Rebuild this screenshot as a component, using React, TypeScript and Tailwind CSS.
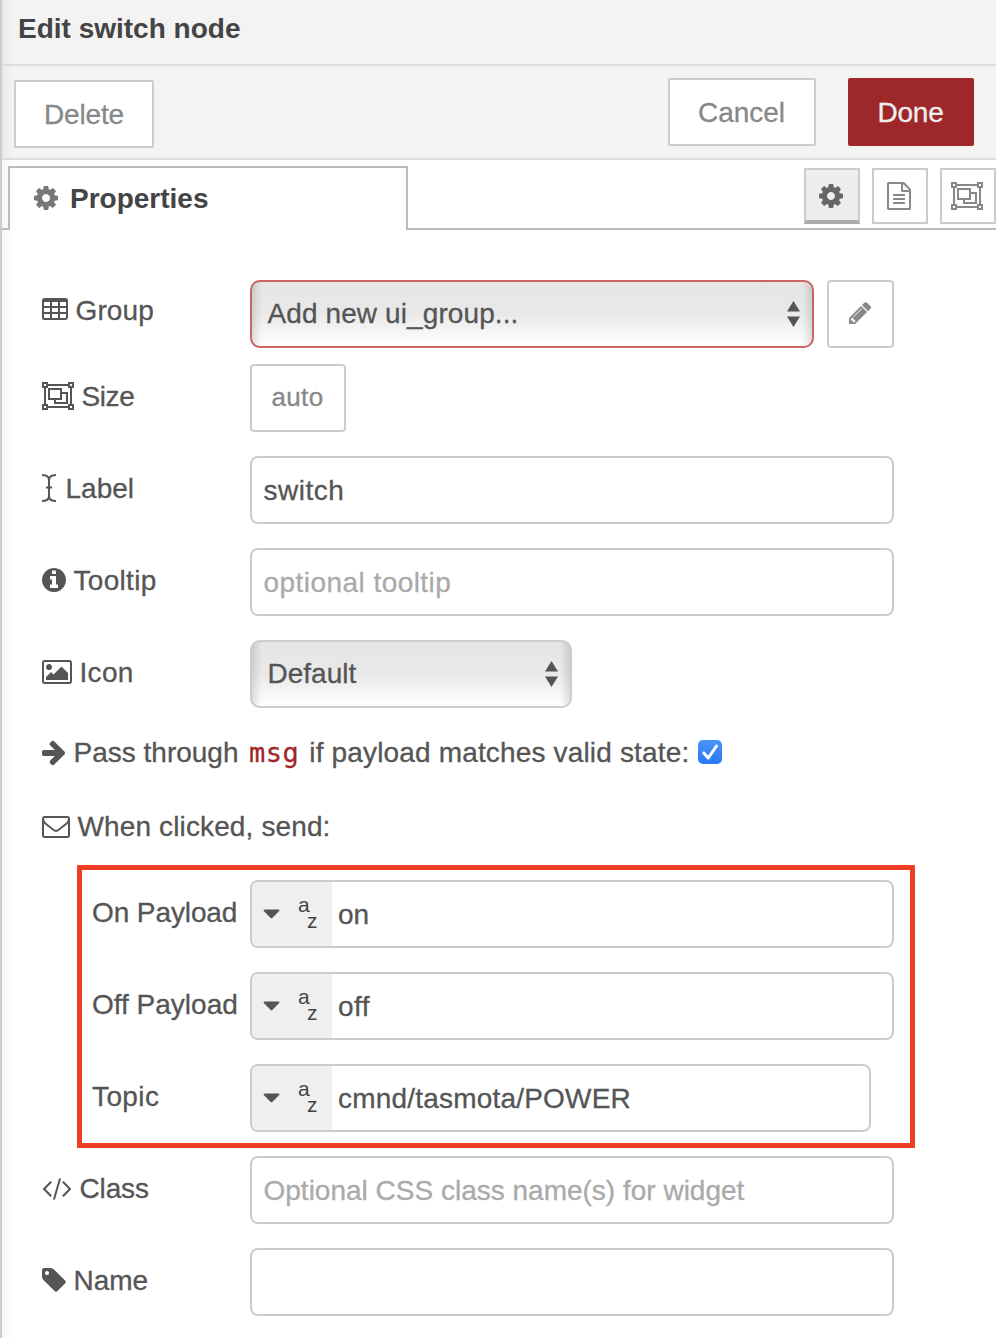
import React from "react";

const PATHS = {
  cog: "M1152 896q0-106-75-181t-181-75-181 75-75 181 75 181 181 75 181-75 75-181zm512-109v222q0 12-8 23t-20 13l-185 28q-19 54-39 91 35 50 107 138 10 12 10 25t-9 23q-27 37-99 108t-94 71q-12 0-26-9l-138-108q-44 23-91 38-16 136-29 186-7 28-36 28h-222q-14 0-24.5-8.5t-11.5-21.5l-28-184q-49-16-90-37l-141 107q-10 9-25 9-14 0-25-11-126-114-165-168-7-10-7-23 0-12 8-23 15-21 51-66.5t54-70.5q-27-50-41-99l-183-27q-13-2-21-12.5t-8-23.5v-222q0-12 8-23t19-13l186-28q14-46 39-92-40-57-107-138-10-12-10-24 0-10 9-23 26-36 98.5-107.5t94.5-71.5q13 0 26 10l138 107q44-23 91-38 16-136 29-186 7-28 36-28h222q14 0 24.5 8.5t11.5 21.5l28 184q49 16 90 37l142-107q9-9 24-9 13 0 25 10 129 119 165 170 7 8 7 22 0 12-8 23-15 21-51 66.5t-54 70.5q26 50 41 98l183 28q13 2 21 12.5t8 23.5z",
  envelope:
    "M1664 1504v-768q-32 36-69 66-268 206-426 338-51 43-83 67t-86.5 48.5-102.5 24.5h-2q-48 0-102.5-24.5t-86.5-48.5-83-67q-158-132-426-338-37-30-69-66v768q0 13 9.5 22.5t22.5 9.5h1472q13 0 22.5-9.5t9.5-22.5zm0-1051v-24.5l-.5-13-3-12.5-5.5-9-9-7.5-14-2.5h-1472q-13 0-22.5 9.5t-9.5 22.5q0 168 147 284 193 152 401 317 6 5 35 29.5t46 37.5 44.5 31.5 50.5 27.5 43 9h2q20 0 43-9t50.5-27.5 44.5-31.5 46-37.5 35-29.5q208-165 401-317 54-43 100.5-115.5t46.5-131.5zm128-37v1088q0 66-47 113t-113 47h-1472q-66 0-113-47t-47-113v-1088q0-66 47-113t113-47h1472q66 0 113 47t47 113z",
  arrow:
    "M1600 960q0 54-37 91l-651 651q-39 37-91 37-51 0-90-37l-75-75q-38-38-38-91t38-91l293-293h-704q-52 0-84.5-37.5t-32.5-90.5v-128q0-53 32.5-90.5t84.5-37.5h704l-293-294q-38-36-38-90t38-90l75-75q38-38 90-38 53 0 91 38l651 651q37 35 37 90z",
  info: "M1152 1376v-160q0-14-9-23t-23-9h-96v-512q0-14-9-23t-23-9h-320q-14 0-23 9t-9 23v160q0 14 9 23t23 9h96v320h-96q-14 0-23 9t-9 23v160q0 14 9 23t23 9h448q14 0 23-9t9-23zm-128-896v-160q0-14-9-23t-23-9h-192q-14 0-23 9t-9 23v160q0 14 9 23t23 9h192q14 0 23-9t9-23zm640 416q0 209-103 385.5t-279.5 279.5-385.5 103-385.5-103-279.5-279.5-103-385.5 103-385.5 279.5-279.5 385.5-103 385.5 103 279.5 279.5 103 385.5z",
  tag: "M576 448q0-53-37.5-90.5t-90.5-37.5-90.5 37.5-37.5 90.5 37.5 90.5 90.5 37.5 90.5-37.5 37.5-90.5zm1067 576q0 53-37 90l-491 492q-39 37-91 37-53 0-90-37l-715-716q-38-37-64.5-101t-26.5-117v-416q0-52 38-90t90-38h416q53 0 117 26.5t102 64.5l715 714q37 39 37 91z",
  pencil:
    "M491 1536l91-91-235-235-91 91v107h128v128h107zm523-928q0-22-22-22-10 0-17 7l-542 542q-7 7-7 17 0 22 22 22 10 0 17-7l542-542q7-7 7-17zm-54-192l416 416-832 832h-416v-416zm683 96q0 53-37 90l-166 166-416-416 166-165q36-38 90-38 53 0 91 38l235 234q37 39 37 91z",
  file: "M1596 380q28 28 48 76t20 88v1152q0 40-28 68t-68 28h-1344q-40 0-68-28t-28-68v-1600q0-40 28-68t68-28h896q40 0 88 20t76 48zm-444-244v376h376q-10-29-22-41l-313-313q-12-12-41-22zm384 1528v-1024h-416q-40 0-68-28t-28-68v-416h-768v1536h1280zm-1024-864q0-14 9-23t23-9h704q14 0 23 9t9 23v64q0 14-9 23t-23 9h-704q-14 0-23-9t-9-23v-64zm736 224q14 0 23 9t9 23v64q0 14-9 23t-23 9h-704q-14 0-23-9t-9-23v-64q0-14 9-23t23-9h704zm0 256q14 0 23 9t9 23v64q0 14-9 23t-23 9h-704q-14 0-23-9t-9-23v-64q0-14 9-23t23-9h704z",
  image:
    "M576 576q0 80-56 136t-136 56-136-56-56-136 56-136 136-56 136 56 56 136zm1024 384v448h-1408v-192l320-320 160 160 512-512zm96-704h-1600q-13 0-22.5 9.5t-9.5 22.5v1216q0 13 9.5 22.5t22.5 9.5h1600q13 0 22.5-9.5t9.5-22.5v-1216q0-13-9.5-22.5t-22.5-9.5zm160 32v1216q0 66-47 113t-113 47h-1600q-66 0-113-47t-47-113v-1216q0-66 47-113t113-47h1600q66 0 113 47t47 113z",
  code: "M681 1399l-50 50q-10 10-23 10t-23-10l-466-466q-10-10-10-23t10-23l466-466q10-10 23-10t23 10l50 50q10 10 10 23t-10 23l-393 393 393 393q10 10 10 23t-10 23zm591-1067l-373 1291q-4 13-15.5 19.5t-23.5 2.5l-62-17q-13-4-19.5-15.5t-2.5-24.5l373-1291q4-13 15.5-19.5t23.5-2.5l62 17q13 4 19.5 15.5t2.5 24.5zm657 651l-466 466q-10 10-23 10t-23-10l-50-50q-10-10-10-23t10-23l393-393-393-393q-10-10-10-23t10-23l50-50q10-10 23-10t23 10l466 466q10 10 10 23t-10 23z",
  table:
    "M192 128h1408q128 8 128 160v1088q0 152-160 160h-1344q-160 0-160-160v-1088q0-152 128-160zM192 384v256h384v-256zM704 384v256h384v-256zM1216 384v256h384v-256zM192 768v256h384v-256zM704 768v256h384v-256zM1216 768v256h384v-256zM192 1152v256h384v-256zM704 1152v256h384v-256zM1216 1152v256h384v-256z",
};

/* x = left edge of the glyph in font units, w = advance width in font units, scale = units per pixel */
function Glyph({ name, x = 128, w = 1536, scale = 64 }: { name: keyof typeof PATHS; x?: number; w?: number; scale?: number }) {
  return (
    <svg
      className="block shrink-0"
      width={w / scale}
      height={1792 / scale}
      viewBox={`${x} 0 ${w} 1792`}
      fill="currentColor"
      fillRule={name === "table" ? "evenodd" : "nonzero"}
    >
      <path d={PATHS[name]} />
    </svg>
  );
}

function ObjectGroup() {
  return (
    <svg className="block shrink-0" width={32} height={28} viewBox="0 0 32 28" fill="none" stroke="currentColor" strokeWidth={2}>
      <path d="M6 3h20M6 25h20M3 6v16M29 6v16" />
      <path d="M1 1h4v4h-4zM27 1h4v4h-4zM1 23h4v4h-4zM27 23h4v4h-4z" />
      <path d="M7 7h12v10h-12z" />
      <path d="M20 11h5v10h-12v-3" />
    </svg>
  );
}

function ICursor() {
  return (
    <svg className="mr-[2px] block shrink-0" width={14} height={28} viewBox="0 0 14 28" fill="none" stroke="currentColor" strokeWidth={2}>
      <path d="M0 1q7 0 7 5v16q0 5-7 5M14 1q-7 0-7 5v16q0 5 7 5M4 13.5h6" />
    </svg>
  );
}

function Label({ icon, text, className = "", textClass = "" }: { icon?: React.ReactNode; text: string; className?: string; textClass?: string }) {
  return (
    <div className={`flex h-10 shrink-0 items-center gap-[7.5px] leading-10 whitespace-nowrap ${className}`}>
      {icon}
      <span className={`pt-[2px] ${textClass}`}>{text}</span>
    </div>
  );
}

const row = "flex h-[68px] pl-10";
const labelBox = "w-[208px] mt-3";
const input =
  "h-[68px] w-[644px] rounded-[8px] border-2 border-[#ccc] bg-white pl-[11.5px] pt-[2px] text-[28px] text-[#555] placeholder:text-[#aaa] outline-none";

function UpDown() {
  return (
    <svg className="block" width={13} height={26} viewBox="0 0 13 26" fill="#555">
      <path d="M6.500 0L13 10.500H0zM0 15.500H13L6.500 26z" />
    </svg>
  );
}

function Select({ text, className, textClass = "" }: { text: string; className: string; textClass?: string }) {
  return (
    <div
      className={`flex h-[68px] items-center justify-between rounded-[10px] border-2 pl-[15.5px] pr-3 bg-[linear-gradient(90deg,rgba(0,0,0,0.11),transparent_10px,transparent_calc(100%-10px),rgba(0,0,0,0.11)),linear-gradient(#e5e5e5,#e9e9e9_50%,#fff)] ${className}`}
    >
      <span className={textClass}>{text}</span>
      <UpDown />
    </div>
  );
}

function Payload({ label, value, labelClass, width, valueClass }: { label: string; value: string; labelClass: string; width: string; valueClass: string }) {
  return (
    <div className="flex h-[68px] pl-[10px]">
      <Label text={label} className="mt-3 w-[158px]" textClass={labelClass} />
      <div className={`flex h-[68px] overflow-hidden rounded-[8px] border-2 border-[#ccc] bg-white ${width}`}>
        <div className="flex w-20 shrink-0 items-center bg-[#efefef] pl-[11px]">
          <svg width={17} height={10} viewBox="0 0 17 10" fill="#555">
            <path d="M1.500 0.500h14q1.500 0 .7 1.500l-6.600 6.800q-1.100 1-2.200 0L.8 2Q0 .5 1.500.5z" />
          </svg>
          <div className="ml-[18px] flex flex-col text-[21px] leading-5 text-[#444] [-webkit-text-stroke:0]">
            <span className="-mt-[3px]">a</span>
            <span className="-mt-1 pl-[9px]">z</span>
          </div>
        </div>
        <span className={`pl-[6px] leading-[66px] ${valueClass}`}>{value}</span>
      </div>
    </div>
  );
}

export default function App() {
  return (
    <div className="flex h-[1338px] w-[996px] flex-col overflow-hidden border-l-2 border-[#ccc] bg-[linear-gradient(90deg,rgba(0,0,0,0.045),transparent_10px)] font-['Liberation_Sans',Arial,sans-serif] text-[28px] text-[#555] [-webkit-text-stroke:0.3px]">
      <header className="h-[66px] shrink-0 border-b-2 border-[#ddd] bg-black/[0.047] pl-4 pt-[9px] font-bold leading-10 text-[#444] [-webkit-text-stroke:0]">
        Edit switch node
      </header>
      <div className="flex h-[94px] shrink-0 border-b-2 border-[#ddd] bg-black/[0.047] pl-3 text-[#888]">
        <button className="mt-[14px] h-[68px] w-[140px] rounded-[2px] border-2 border-[#ccc] bg-white pt-[2px] tracking-[-0.15px]">Delete</button>
        <button className="ml-[514px] mt-3 h-[68px] w-[148px] rounded-[2px] border-2 border-[#ccc] bg-white pt-[2px] pr-[1px]">Cancel</button>
        <button className="ml-8 mt-3 h-[68px] w-[126px] rounded-[2px] bg-[#9e2729] pt-[2px] pr-[1px] tracking-[-0.2px] text-[#eee]">Done</button>
      </div>
      <nav className="flex h-[70px] shrink-0">
        <div className="w-[6px] border-b-2 border-[#bbb]" />
        <div className="mt-[6px] flex h-16 w-[400px] items-center gap-3 border-2 border-b-0 border-[#bbb] bg-white pl-6 text-[#777]">
          <div className="-mt-[2px]">
            <Glyph name="cog" />
          </div>
          <span className="font-bold text-[#444] [-webkit-text-stroke:0]">Properties</span>
        </div>
        <div className="flex flex-1 justify-end gap-3 border-b-2 border-[#bbb] pt-2 text-[#888]">
          <div className="flex size-14 items-center justify-center border-2 border-b-4 border-[#ccc] border-b-[#aaa] bg-[#eee] pt-[2px] pr-[2px] text-[#666]">
            <Glyph name="cog" />
          </div>
          <div className="flex size-14 items-center justify-center border-2 border-[#ccc] bg-white pr-[2px]">
            <Glyph name="file" />
          </div>
          <div className="flex size-14 items-center justify-center border-2 border-[#ccc] bg-white pr-[2px]">
            <ObjectGroup />
          </div>
        </div>
      </nav>
      <main className="pt-[50px]">
        <div className={row}>
          <Label icon={<Glyph name="table" x={64} w={1664} />} text="Group" className="mt-[10px] w-[208px]" textClass="tracking-[0.1px]" />
          <Select text="Add new ui_group..." className="w-[564px] border-[#cc6666]" textClass="tracking-[0.1px]" />
          <button className="ml-[13px] flex h-[68px] w-[67px] items-center justify-center rounded-[4px] border-2 border-[#ccc] bg-white pb-[2px] text-[#888]">
            <Glyph name="pencil" scale={69} />
          </button>
        </div>
        <div className={`${row} mt-4`}>
          <Label icon={<ObjectGroup />} text="Size" className={labelBox} textClass="tracking-[-0.4px]" />
          <button className="h-[68px] w-24 rounded-[4px] border-2 border-[#ccc] bg-white pr-[1px] pb-[2px] text-[26px] tracking-[0.3px] text-[#888]">auto</button>
        </div>
        <div className={`${row} mt-6`}>
          <Label icon={<ICursor />} text="Label" className={labelBox} />
          <input className={`${input} tracking-[0.5px]`} defaultValue="switch" />
        </div>
        <div className={`${row} mt-6`}>
          <Label icon={<Glyph name="info" />} text="Tooltip" className={labelBox} textClass="tracking-[0.3px]" />
          <input className={`${input} tracking-[0.45px]`} placeholder="optional tooltip" />
        </div>
        <div className={`${row} mt-6`}>
          <Label icon={<Glyph name="image" x={-64} w={1920} />} text="Icon" className={labelBox} textClass="tracking-[0.3px]" />
          <Select text="Default" className="w-[322px] border-[#ccc]" />
        </div>
        <div className="mt-6 flex h-10 items-center pl-10 leading-10 whitespace-nowrap">
          <Glyph name="arrow" x={128} />
          <span className="ml-[7.5px] pt-[2px]">Pass through</span>
          <code className="ml-[10.5px] pt-[2px] font-['DejaVu_Sans_Mono',monospace] text-[27px] tracking-[0.5px] text-[#9e2729]">msg</code>
          <span className="ml-[10px] pt-[2px] tracking-[0.16px]">if payload matches valid state:</span>
          <svg className="ml-[9px]" width={24} height={24} viewBox="0 0 24 24">
            <defs>
              <linearGradient id="check" x1="0" y1="0" x2="0" y2="1">
                <stop offset="0" stopColor="#4a94f8" />
                <stop offset="1" stopColor="#2a78f5" />
              </linearGradient>
            </defs>
            <rect width={24} height={24} rx={5} fill="url(#check)" />
            <path d="M5.800 13l4.400 5L18.500 6" fill="none" stroke="#fff" strokeWidth={3} strokeLinecap="round" strokeLinejoin="round" />
          </svg>
        </div>
        <div className="mt-[34px] flex h-10 pl-10">
          <Label icon={<Glyph name="envelope" x={0} w={1792} />} text="When clicked, send:" textClass="tracking-[0.13px]" />
        </div>
        <section className="ml-[75px] mt-[19px] flex h-[283px] w-[838px] flex-col gap-6 border-[5px] border-[#ee3f26] pt-[10px]">
          <Payload label="On Payload" value="on" labelClass="tracking-[-0.1px]" valueClass="" width="w-[644px]" />
          <Payload label="Off Payload" value="off" labelClass="" valueClass="tracking-[0.4px]" width="w-[644px]" />
          <Payload label="Topic" value="cmnd/tasmota/POWER" labelClass="tracking-[0.4px]" valueClass="tracking-[0.2px]" width="w-[621px]" />
        </section>
        <div className={`${row} mt-2`}>
          <Label icon={<Glyph name="code" x={64} w={1920} />} text="Class" className={labelBox} textClass="tracking-[-0.15px]" />
          <input className={input} placeholder="Optional CSS class name(s) for widget" />
        </div>
        <div className={`${row} mt-6`}>
          <Label icon={<Glyph name="tag" />} text="Name" className={labelBox} />
          <input className={input} />
        </div>
      </main>
    </div>
  );
}
